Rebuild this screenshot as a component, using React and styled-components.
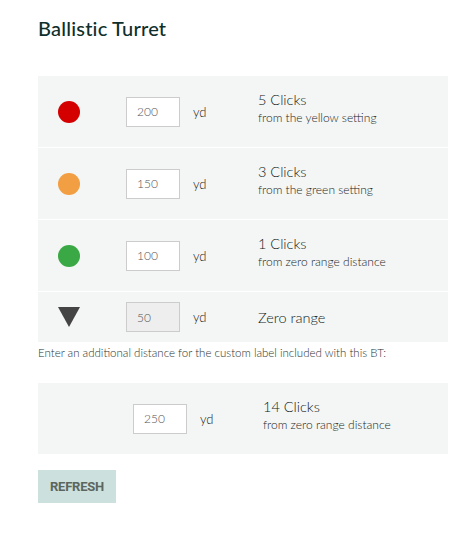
import styled, { createGlobalStyle } from "styled-components";

const GlobalStyle = createGlobalStyle`
  body {
    margin: 0;
    background: #ffffff;
    font-family: Lato, "Open Sans", sans-serif;
    color: #1f2d2b;
  }
`;

const rows = [
  { marker: "circle", color: "#d40000", value: "200", title: "5 Clicks", sub: "from the yellow setting" },
  { marker: "circle", color: "#f29e42", value: "150", title: "3 Clicks", sub: "from the green setting" },
  { marker: "circle", color: "#3aa845", value: "100", title: "1 Clicks", sub: "from zero range distance" },
  { marker: "triangle", value: "50", title: "Zero range", zero: true },
];

export default function App() {
  return (
    <Page>
      <GlobalStyle />
      <Title>Ballistic Turret</Title>

      <Panel>
        {rows.map((row) => (
          <Row key={row.value} $short={row.zero} $first="88px">
            <Marker>
              {row.marker === "circle" ? (
                <Dot $color={row.color} />
              ) : (
                <svg width="22" height="20" viewBox="0 0 22 20">
                  <path d="M0 0 H22 L11 20 Z" fill="#444444" />
                </svg>
              )}
            </Marker>
            <Input defaultValue={row.value} disabled={row.zero} $zero={row.zero} />
            <Unit>yd</Unit>
            <Info $lift={!row.zero}>
              <Clicks>{row.title}</Clicks>
              {row.sub && <Sub>{row.sub}</Sub>}
            </Info>
          </Row>
        ))}
      </Panel>

      <Note>Enter an additional distance for the custom label included with this BT:</Note>

      <Panel $gap>
        <Row $first="95px">
          <Marker />
          <Input defaultValue="250" />
          <Unit $narrow>yd</Unit>
          <Info $lift>
            <Clicks>14 Clicks</Clicks>
            <Sub>from zero range distance</Sub>
          </Info>
        </Row>
      </Panel>

      <Button>REFRESH</Button>
    </Page>
  );
}

const Page = styled.div`
  width: 410px;
  padding: 16px 0 30px 38px;
`;

const Title = styled.h1`
  margin: 0 0 36px;
  font-family: Lato, "Open Sans", sans-serif;
  font-size: 20px;
  line-height: 24px;
  font-weight: 500;
  color: #0e2f2b;
  letter-spacing: 0.2px;
`;

const Panel = styled.div`
  background: #f4f6f5;
  display: flex;
  flex-direction: column;
  margin-top: ${(p) => (p.$gap ? "23px" : "0")};
  & > * + * {
    border-top: 1px solid #ffffff;
  }
`;

const Row = styled.div`
  display: grid;
  grid-template-columns: ${(p) => p.$first} 67px auto 1fr;
  align-items: center;
  height: ${(p) => (p.$short ? "50px" : "71px")};
`;

const Marker = styled.div`
  display: flex;
  align-items: center;
  padding-left: 20px;
`;

const Dot = styled.span`
  width: 22px;
  height: 22px;
  border-radius: 50%;
  background: ${(p) => p.$color};
`;

const Input = styled.input`
  box-sizing: border-box;
  width: 54px;
  height: 30px;
  padding: 0 10px;
  border: 1px solid #cccccc;
  background: ${(p) => (p.$zero ? "#eeeeee" : "#ffffff")};
  font-family: Lato, sans-serif;
  font-weight: 300;
  font-size: 12px;
  color: #555555;
  outline: none;
`;

const Unit = styled.span`
  width: ${(p) => (p.$narrow ? "63px" : "65px")};
  font-size: 13px;
  font-weight: 300;
  color: #222222;
`;

const Info = styled.div`
  display: flex;
  flex-direction: column;
  gap: 2px;
  margin-bottom: ${(p) => (p.$lift ? "7px" : "0")};
`;

const Clicks = styled.span`
  font-size: 14.5px;
  line-height: 17px;
  font-weight: 300;
  color: #0f1a19;
`;

const Sub = styled.span`
  font-size: 12px;
  line-height: 15px;
  font-weight: 300;
  color: #1a2523;
`;

const Note = styled.p`
  margin: 3px 0 0;
  font-size: 11.5px;
  line-height: 15px;
  font-weight: 300;
  color: #2a3432;
`;

const Button = styled.button`
  margin-top: 16px;
  width: 78px;
  height: 33px;
  border: none;
  background: #cce0dd;
  font-family: Roboto, sans-serif;
  font-weight: 700;
  font-size: 13px;
  color: #5b6660;
  letter-spacing: -0.2px;
  padding: 0;
`;
